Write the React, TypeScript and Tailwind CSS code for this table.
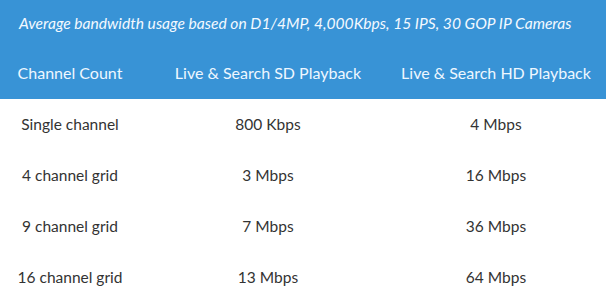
const rows = [
  { count: "Single channel", sd: "800 Kbps", hd: "4 Mbps" },
  { count: "4 channel grid", sd: "3 Mbps", hd: "16 Mbps" },
  { count: "9 channel grid", sd: "7 Mbps", hd: "36 Mbps" },
  { count: "16 channel grid", sd: "13 Mbps", hd: "64 Mbps" },
];

export default function App() {
  return (
    <div className="w-[606px] h-[299px] overflow-hidden bg-white font-['Lato',sans-serif]">
      <div className="bg-[#3893d6]">
        <div className="h-[47px] flex items-center pl-[19px] text-[15.6px] italic text-[#f3f9ff]">
          Average bandwidth usage based on D1/4MP, 4,000Kbps, 15 IPS, 30 GOP IP Cameras
        </div>
        <div className="h-[52px] grid grid-cols-[140px_256px_200px] items-center text-[16px] text-[#eef7ff]">
          <div className="text-center">Channel Count</div>
          <div className="text-center">Live &amp; Search SD Playback</div>
          <div className="text-center">Live &amp; Search HD Playback</div>
        </div>
      </div>
      {rows.map((r) => (
        <div
          key={r.count}
          className="h-[51px] grid grid-cols-[140px_256px_200px] items-center text-[15.5px] text-[#333333]"
        >
          <div className="text-center">{r.count}</div>
          <div className="text-center">{r.sd}</div>
          <div className="text-center">{r.hd}</div>
        </div>
      ))}
    </div>
  );
}
